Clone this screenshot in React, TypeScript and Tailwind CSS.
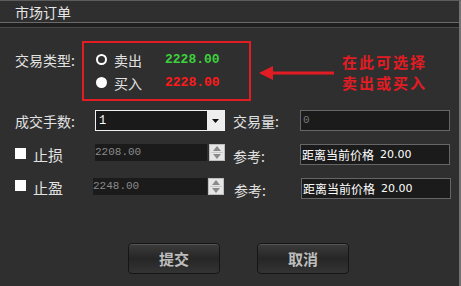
import React from "react";

const cjk = { fontFamily: '"Noto Sans CJK SC", "Noto Sans", sans-serif' };
const mono = { fontFamily: '"Liberation Mono", "DejaVu Sans Mono", monospace' };

function Spinner() {
  return (
    <div className="w-[16px] h-[17px] bg-[#e6e6e6] border border-[#bdbdbd] flex flex-col items-center justify-center gap-[1px]">
      <svg width="8" height="5" viewBox="0 0 8 5"><path d="M4 0 L8 5 L0 5 Z" fill="#8a8a8a" /></svg>
      <div className="w-[12px] h-px bg-[#c8c8c8]" />
      <svg width="8" height="5" viewBox="0 0 8 5"><path d="M0 0 L8 0 L4 5 Z" fill="#8a8a8a" /></svg>
    </div>
  );
}

function Btn({ label }: { label: string }) {
  return (
    <div className="w-[92px] h-[31px] rounded-[4px] border border-[#151515] bg-gradient-to-b from-[#3c3c3c] via-[#262626] to-[#343434] shadow-[inset_0_1px_0_#555] flex items-center justify-center">
      <span className="text-[15px] font-bold text-[#bdbdbd] leading-none" style={cjk}>{label}</span>
    </div>
  );
}

export default function App() {
  return (
    <div className="w-[461px] h-[286px] bg-[#2f2f2f] border-t border-[#5c5c5c] border-r-2 border-r-[#727272] text-[#e2e2e2] text-[14px] overflow-hidden" style={cjk}>
      {/* title */}
      <div className="h-[21px] pl-[15px] flex items-center leading-none text-[14px] text-[#e6e6e6]">市场订单</div>
      <div className="h-[6px] border-t border-[#6a6a6a] border-b border-b-[#4a4a4a] bg-[#1f1f1f]" />

      {/* row 1 */}
      <div className="mt-[13px] flex items-start h-[60px]">
        <div className="ml-[15px] w-[67px] mt-[9px] leading-[20px]">交易类型:</div>
        <div className="w-[169px] h-[60px] border-2 border-[#e31b23] pt-[5px]">
          <div className="h-[23px] flex items-center pl-[12px]">
            <div className="w-[11px] h-[11px] rounded-full border-[2.5px] border-white" />
            <span className="ml-[7px] w-[51px] leading-none">卖出</span>
            <span className="text-[13px] font-bold text-[#3dd13d] leading-none" style={mono}>2228.00</span>
          </div>
          <div className="h-[23px] flex items-center pl-[12px]">
            <div className="w-[11px] h-[11px] rounded-full bg-white" />
            <span className="ml-[7px] w-[51px] leading-none">买入</span>
            <span className="text-[13px] font-bold text-[#ff1a1a] leading-none" style={mono}>2228.00</span>
          </div>
        </div>
        <svg className="ml-[8px] mt-[25px]" width="75" height="14" viewBox="0 0 75 14">
          <path d="M0 7 L14 0 L14 5.5 L75 5.5 L75 8.5 L14 8.5 L14 14 Z" fill="#e31b23" />
        </svg>
        <div className="ml-[8px] mt-[10px] text-[15px] font-bold tracking-[2px] text-[#e31b23]">
          <div className="leading-[21px]">在此可选择</div>
          <div className="leading-[21px]">卖出或买入</div>
        </div>
      </div>

      {/* row 2 */}
      <div className="mt-[9px] flex items-center h-[21px]">
        <div className="ml-[15px] w-[80px] leading-none">成交手数:</div>
        <div className="w-[130px] h-[21px] border border-[#f0f0f0] bg-[#1a1a1a] flex">
          <div className="flex-1 pl-[3px] flex items-center text-[12px] text-white leading-none" style={mono}>1</div>
          <div className="w-[17px] bg-[#eeeeee] flex items-center justify-center">
            <svg width="7" height="4" viewBox="0 0 7 4"><path d="M0 0 L7 0 L3.5 4 Z" fill="#111" /></svg>
          </div>
        </div>
        <div className="ml-[8px] w-[67px] leading-none">交易量:</div>
        <div className="w-[150px] h-[21px] border border-[#666] bg-[#1b1b1b] pl-[2px] flex items-center text-[11px] text-[#777] leading-none" style={mono}>0</div>
      </div>

      {/* row 3 */}
      <div className="mt-[13px] flex items-start h-[21px]">
        <div className="ml-[15px] mt-[4px] w-[11px] h-[11px] bg-white" />
        <div className="ml-[7px] w-[62px] mt-[1px] text-[15px] leading-[20px]">止损</div>
        <div className="w-[112px] h-[17px] bg-[#1b1b1b] flex items-center text-[11px] text-[#8a8a8a] leading-none" style={mono}>2208.00</div>
        <div className="ml-[2px]"><Spinner /></div>
        <div className="ml-[8px] w-[67px] mt-[2px] leading-[20px]">参考:</div>
        <div className="w-[150px] h-[21px] border border-[#666] bg-[#1b1b1b] pl-[1px] flex items-center text-[12px] text-white leading-none whitespace-nowrap">
          距离当前价格<span className="ml-[6px]" style={{ fontFamily: '"DejaVu Sans", sans-serif', fontSize: 11 }}>20.00</span>
        </div>
      </div>

      {/* row 4 */}
      <div className="mt-[13px] flex items-start h-[21px]">
        <div className="ml-[15px] mt-[2px] w-[11px] h-[11px] bg-white" />
        <div className="ml-[7px] w-[60px] text-[15px] leading-[20px]">止盈</div>
        <div className="w-[114px] h-[17px] bg-[#1b1b1b] flex items-center text-[11px] text-[#8a8a8a] leading-none" style={mono}>2248.00</div>
        <div className="ml-[1px]"><Spinner /></div>
        <div className="ml-[10px] w-[67px] mt-[2px] leading-[20px]">参考:</div>
        <div className="w-[150px] h-[21px] border border-[#666] bg-[#1b1b1b] pl-[1px] flex items-center text-[12px] text-white leading-none whitespace-nowrap">
          距离当前价格<span className="ml-[6px]" style={{ fontFamily: '"DejaVu Sans", sans-serif', fontSize: 11 }}>20.00</span>
        </div>
      </div>

      {/* buttons */}
      <div className="mt-[44px] flex pl-[128px] gap-[37px]">
        <Btn label="提交" />
        <Btn label="取消" />
      </div>
    </div>
  );
}
